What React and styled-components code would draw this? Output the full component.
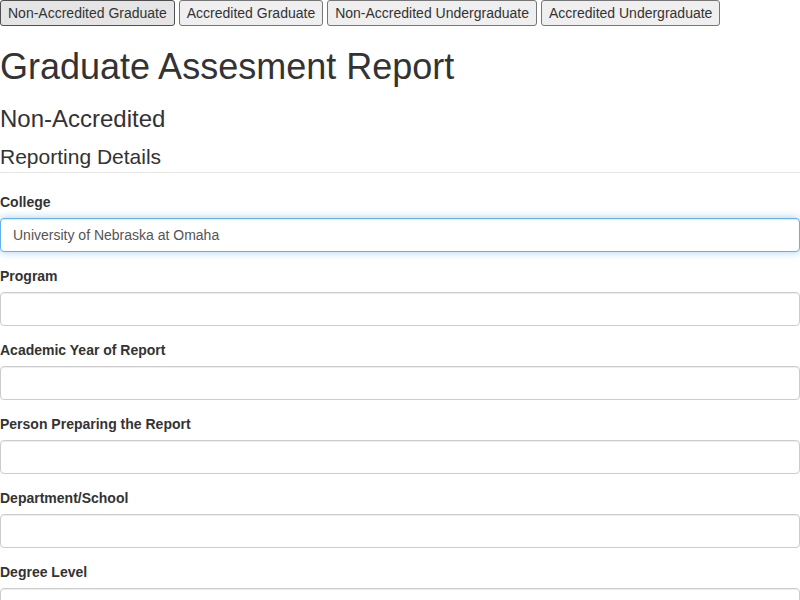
import React from 'react';
import styled, { createGlobalStyle, css } from 'styled-components';

const GlobalStyle = createGlobalStyle`
  html, body {
    margin: 0;
    padding: 0;
    overflow: hidden;
    background: #fff;
  }
  body {
    font-family: "Liberation Sans", Arial, sans-serif;
    font-size: 14px;
    line-height: 1.428571;
    color: #333;
  }
  * {
    box-sizing: border-box;
  }
`;

const Page = styled.div`
  width: 800px;
`;

const Toolbar = styled.div`
  display: flex;
  gap: 4px;
  height: 27px;
`;

const TabButton = styled.button`
  font-family: inherit;
  font-size: 14px;
  line-height: 20px;
  height: 26px;
  padding: 2px 7px;
  color: #333;
  background: ${(p) => (p.hovered ? '#e5e5e5' : '#efefef')};
  border: 1px solid ${(p) => (p.hovered ? '#4f4f4f' : '#767676')};
  border-radius: 3px;
  cursor: pointer;
`;

const Title = styled.h1`
  font-size: 36px;
  font-weight: 500;
  line-height: 1.1;
  margin: 20px 0 10px;
`;

const Subtitle = styled.h3`
  font-size: 24px;
  font-weight: 500;
  line-height: 1.1;
  margin: 19px 0 10px;
`;

const Fieldset = styled.fieldset`
  margin: 0;
  padding: 0;
  border: 0;
  min-width: 0;
`;

const Legend = styled.legend`
  display: block;
  width: 100%;
  padding: 0;
  margin-bottom: 20px;
  font-size: 21px;
  line-height: inherit;
  color: #333;
  border: 0;
  border-bottom: 1px solid #e5e5e5;
`;

const FormGroup = styled.div`
  margin-bottom: 15px;
`;

const Label = styled.label`
  display: inline-block;
  max-width: 100%;
  margin-bottom: 5px;
  font-weight: 700;
`;

const TextInput = styled.input`
  display: block;
  width: 100%;
  height: 34px;
  padding: 6px 12px;
  font-family: inherit;
  font-size: 14px;
  line-height: 1.428571;
  color: #555;
  background: #fff;
  border: 1px solid #ccc;
  border-radius: 4px;
  box-shadow: inset 0 1px 1px rgba(0, 0, 0, 0.075);
  outline: 0;
  ${(p) => p.focused && css`
    border-color: #66afe9;
    box-shadow: inset 0 1px 1px rgba(0, 0, 0, 0.075), 0 0 8px rgba(102, 175, 233, 0.6);
  `}
`;

const tabs = [
  'Non-Accredited Graduate',
  'Accredited Graduate',
  'Non-Accredited Undergraduate',
  'Accredited Undergraduate',
];

const fields = [
  { id: 'college', label: 'College', value: 'University of Nebraska at Omaha', focused: true },
  { id: 'program', label: 'Program' },
  { id: 'year', label: 'Academic Year of Report' },
  { id: 'person', label: 'Person Preparing the Report' },
  { id: 'department', label: 'Department/School' },
  { id: 'degree', label: 'Degree Level' },
];

const App = () => (
  <Page>
    <GlobalStyle />
    <Toolbar>
      {tabs.map((t, i) => (
        <TabButton key={t} type="button" hovered={i === 0 ? 1 : 0}>{t}</TabButton>
      ))}
    </Toolbar>
    <Title>Graduate Assesment Report</Title>
    <Subtitle>Non-Accredited</Subtitle>
    <Fieldset>
      <Legend>Reporting Details</Legend>
      {fields.map((f) => (
        <FormGroup key={f.id}>
          <Label htmlFor={f.id}>{f.label}</Label>
          <TextInput
            id={f.id}
            type="text"
            defaultValue={f.value || ''}
            focused={f.focused ? 1 : 0}
          />
        </FormGroup>
      ))}
    </Fieldset>
  </Page>
);

export default App;
